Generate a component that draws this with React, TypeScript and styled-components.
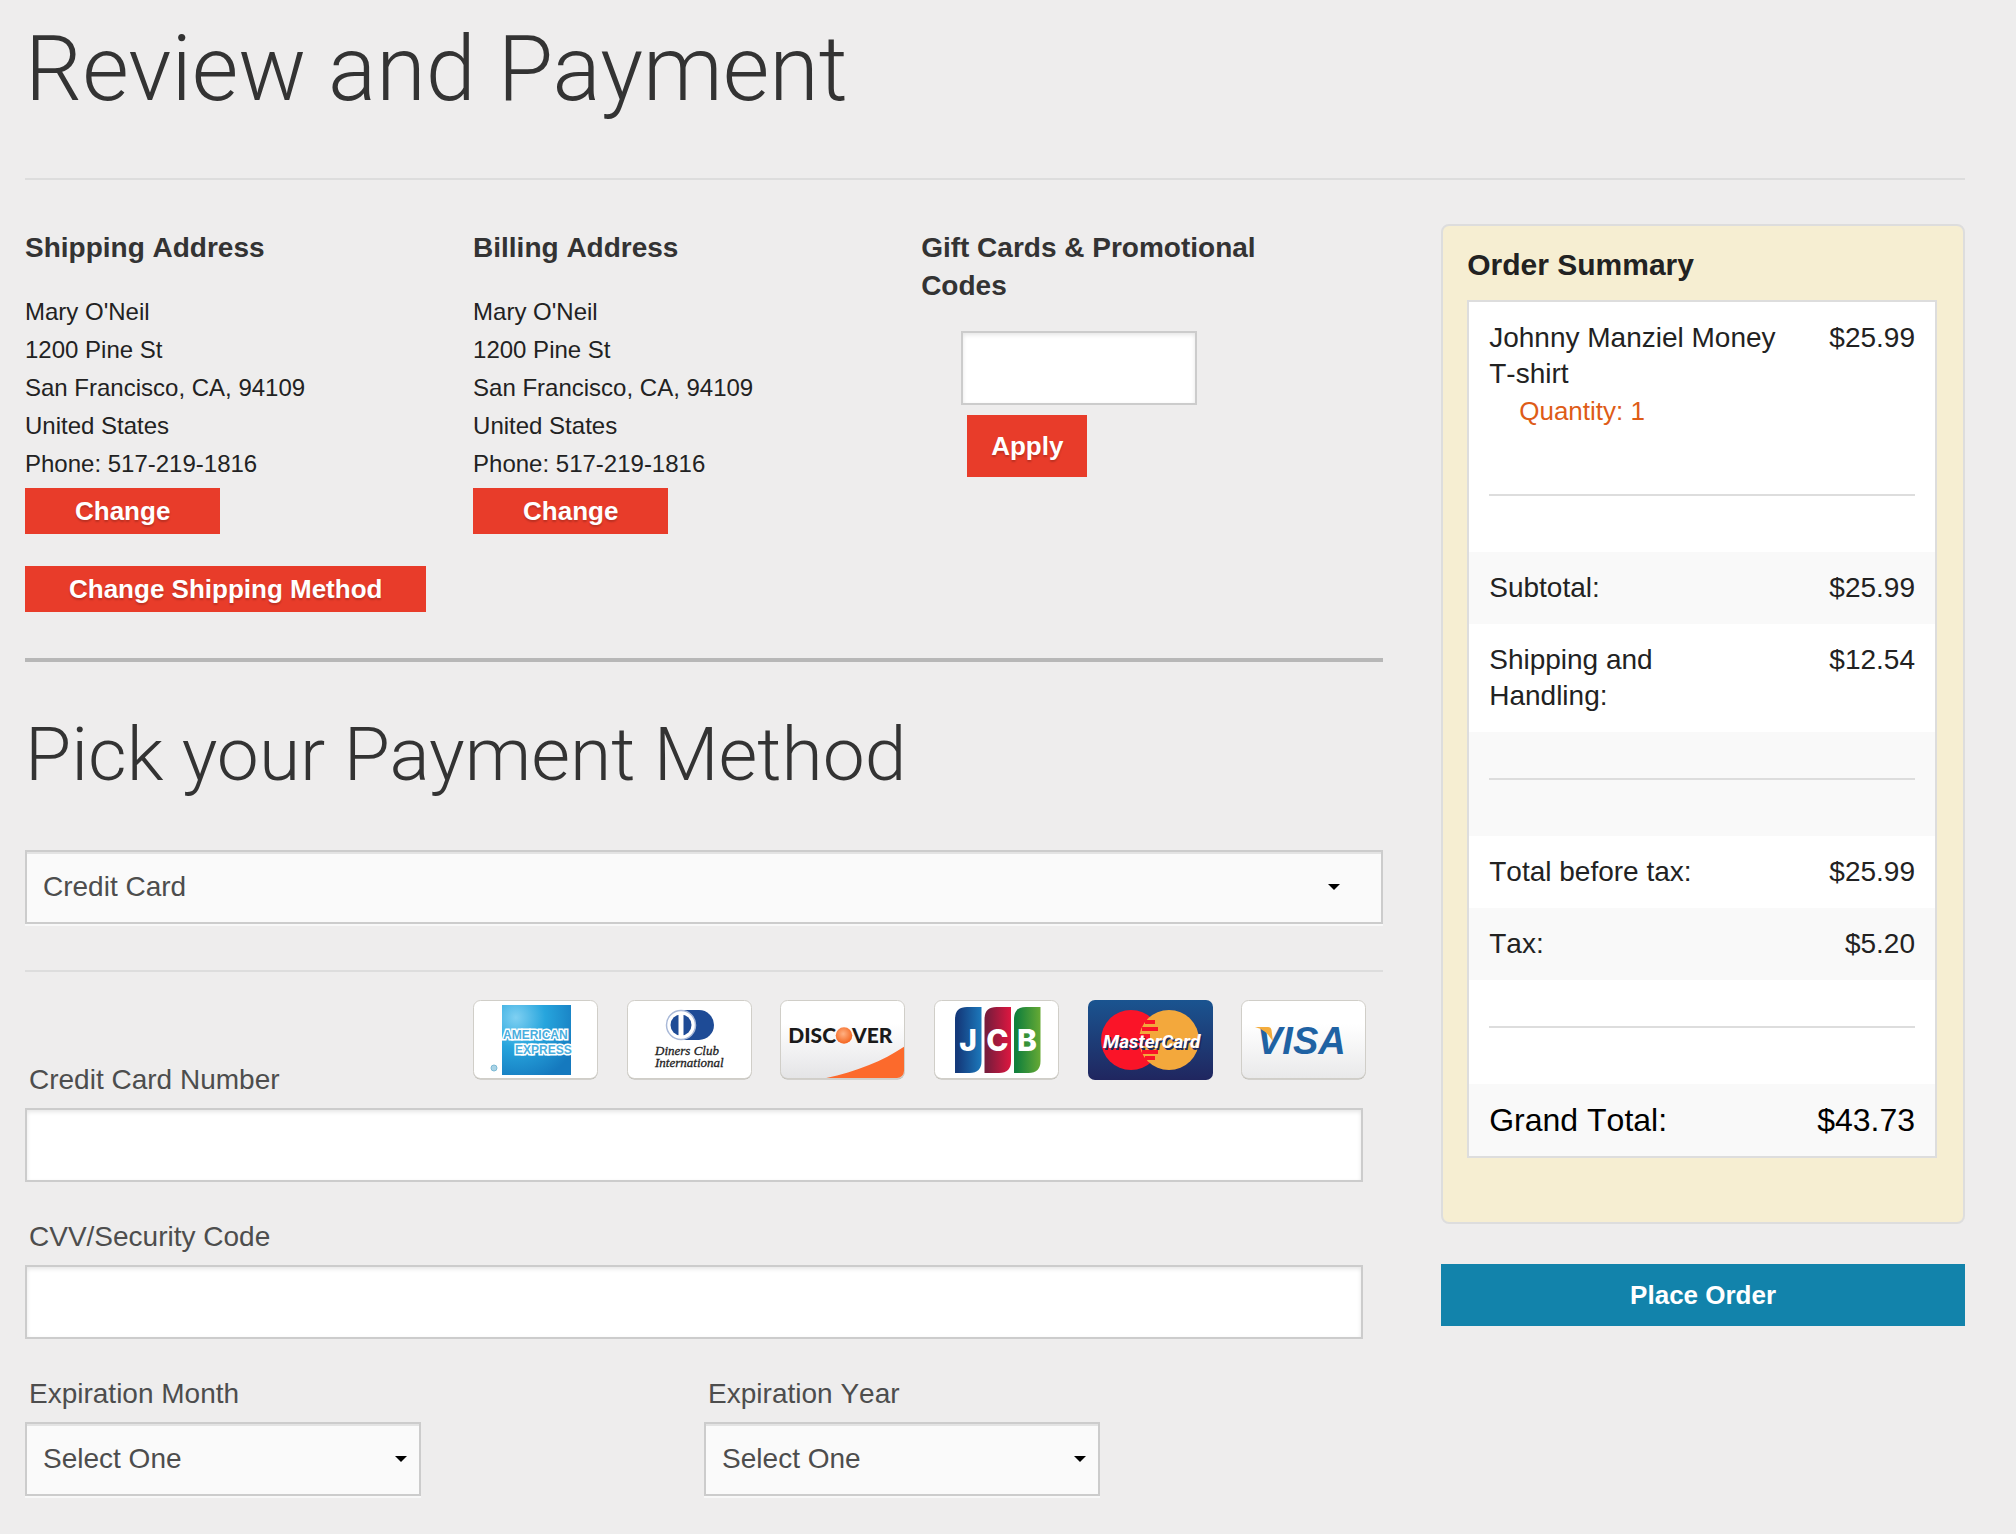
import React from "react";
import styled, { createGlobalStyle, css } from "styled-components";

const color = {
  page: "#eeeded",
  heading: "#333333",
  text: "#222222",
  label: "#4d4d4d",
  line: "#dddddd",
  field: "#cccccc",
  red: "#e83c2a",
  blue: "#1283ab",
};

const GlobalStyle = createGlobalStyle`
  *, *::before, *::after { box-sizing: border-box; }
  body {
    margin: 0;
    background: ${color.page};
    color: ${color.text};
    font-family: "Liberation Sans", Arial, Helvetica, sans-serif;
    font-size: 28px;
    line-height: 38px;
    font-kerning: none;
  }
`;

const Page = styled.div`
  padding: 18px 51px 36px 25px;
`;

const lightTitle = css`
  margin: 0;
  font-family: Roboto, "Helvetica Neue", sans-serif;
  font-weight: 300;
  font-kerning: auto;
  color: ${color.heading};
`;

const PageTitle = styled.h1`
  ${lightTitle}
  font-size: 90px;
  line-height: 104px;
`;

const SectionTitle = styled.h2`
  ${lightTitle}
  font-size: 75px;
  line-height: 88px;
  margin: 48px 0 52px;
`;

const Divider = styled.hr<{ $strong?: boolean; $top: number }>`
  border: 0;
  margin: ${(p) => p.$top}px 0 0;
  height: ${(p) => (p.$strong ? 4 : 2)}px;
  background: ${(p) => (p.$strong ? "#b7b7b7" : color.line)};
`;

const Columns = styled.div`
  display: flex;
  align-items: flex-start;
  gap: 58px;
  padding-top: 44px;
`;

const Main = styled.main`
  flex: 1;
  min-width: 0;
  padding-top: 5px;
`;

const Aside = styled.aside`
  flex: 0 0 27%;
`;

const Thirds = styled.div`
  display: grid;
  grid-template-columns: repeat(3, minmax(0, 1fr));
  padding-right: 14px;
`;

const BlockTitle = styled.h3`
  margin: 0 0 26px;
  padding-right: 30px;
  font-size: 28px;
  line-height: 38px;
  font-weight: 700;
  color: ${color.heading};
`;

const AddressText = styled.address`
  font-style: normal;
  font-size: 24px;
  line-height: 38px;
  margin-bottom: 5px;
`;

const Button = styled.button<{ $size?: "small" | "large"; $tone?: "red" | "blue"; $pad?: number; $wide?: boolean }>`
  display: block;
  border: 0;
  border-radius: 0;
  width: ${(p) => (p.$wide ? "100%" : "auto")};
  height: ${(p) => (p.$size === "large" ? 62 : 46)}px;
  padding: 0 ${(p) => p.$pad ?? 24}px;
  background: ${(p) => (p.$tone === "blue" ? color.blue : color.red)};
  color: #ffffff;
  font-family: inherit;
  font-size: 26px;
  line-height: 38px;
  font-weight: 700;
  text-shadow: ${(p) => (p.$tone === "blue" ? "none" : "0 2px 2px rgba(0, 0, 0, 0.2)")};
  white-space: nowrap;
  cursor: pointer;
`;

const ShippingMethod = styled.div`
  padding: 32px 0 0;
`;

const GiftForm = styled.form`
  display: flex;
  flex-direction: column;
  align-items: flex-start;
  gap: 10px;
  padding-left: 40px;
`;

const ApplyRow = styled.div`
  padding-left: 6px;
`;

const TextInput = styled.input<{ $width?: string }>`
  display: block;
  width: ${(p) => p.$width ?? "100%"};
  height: 74px;
  padding: 0 16px;
  border: 2px solid ${color.field};
  border-radius: 0;
  background: #ffffff;
  box-shadow: inset 0 2px 4px rgba(0, 0, 0, 0.1);
  color: ${color.label};
  font: inherit;
`;

const SelectBox = styled.div<{ $width?: string }>`
  position: relative;
  width: ${(p) => p.$width ?? "100%"};

  &::after {
    content: "";
    position: absolute;
    top: 34px;
    right: calc(3% + 2px);
    border: 6px solid transparent;
    border-top-color: #000000;
    border-bottom-width: 0;
    pointer-events: none;
  }
`;

const Select = styled.select`
  display: block;
  appearance: none;
  width: 100%;
  height: 74px;
  padding: 0 16px;
  border: 2px solid ${color.field};
  border-radius: 0;
  background: #fafafa;
  box-shadow: inset 0 2px 0 rgba(0, 0, 0, 0.09), 0 2px 0 rgba(255, 255, 255, 0.6);
  color: ${color.label};
  font: inherit;
`;

const Field = styled.div`
  padding-top: 34px;
`;

const Label = styled.label`
  display: block;
  padding-left: 4px;
  margin-bottom: 7px;
  line-height: 42px;
  color: ${color.label};
`;

const CardFields = styled.div`
  padding-right: 20px;
`;

const NumberHead = styled.div`
  display: grid;
  grid-template-columns: minmax(0, 1fr) minmax(0, 2fr);
  align-items: end;
  padding: 28px 14px 0 0;
`;

const CardLogos = styled.div`
  display: flex;
  justify-content: space-between;
  padding-right: 3px;
  margin-bottom: 28px;
`;

const Halves = styled.div`
  display: grid;
  grid-template-columns: repeat(2, minmax(0, 1fr));
`;

const SummaryPanel = styled.section`
  padding: 20px 26px 64px 24px;
  border: 2px solid ${color.line};
  border-radius: 8px;
  background: #f6eed2;
  margin-bottom: 40px;
`;

const SummaryTitle = styled.h2`
  margin: 0 0 16px;
  font-size: 30px;
  line-height: 38px;
  font-weight: 700;
`;

const SummaryTable = styled.table`
  width: 100%;
  border: 2px solid ${color.line};
  border-spacing: 0;
  background: #ffffff;
  line-height: 36px;
`;

const StripedBody = styled.tbody`
  tr:nth-of-type(odd) {
    background: #f9f9f9;
  }
`;

const cell = css`
  padding: 18px 20px;
  font-weight: 400;
  vertical-align: top;
`;

const NameCell = styled.th`
  ${cell}
  padding-right: 0;
  text-align: left;
`;

const AmountCell = styled.td`
  ${cell}
  text-align: right;
`;

const RuleCell = styled.td`
  padding: 0 20px 56px;
`;

const TotalRow = styled.tr`
  font-size: 32px;
  color: #000000;
`;

const Quantity = styled.div`
  padding-left: 30px;
  font-size: 26px;
  line-height: 38px;
  color: #de5c17;
`;

const CardSvg = styled.svg`
  display: block;
  width: 125px;
  height: 80px;
`;

const sans = '"Liberation Sans", Arial, sans-serif';

function CardFace({ id, children, tint = "#ffffff", title }: { id: string; children: React.ReactNode; tint?: string; title: string }) {
  return (
    <CardSvg viewBox="0 0 125 80" role="img" aria-label={title}>
      <defs>
        <linearGradient id={id} x1="0" y1="0" x2="0" y2="1">
          <stop offset="0.3" stopColor="#ffffff" />
          <stop offset="1" stopColor={tint} />
        </linearGradient>
        <clipPath id={`${id}-clip`}>
          <rect x="1" y="1" width="123" height="77" rx="7" />
        </clipPath>
      </defs>
      <rect x="0.5" y="1.5" width="124" height="78" rx="7" fill="#b5b3ac" />
      <rect x="0.5" y="0.5" width="124" height="78" rx="7" fill={`url(#${id})`} stroke="#d0cec8" />
      <g clipPath={`url(#${id}-clip)`}>{children}</g>
    </CardSvg>
  );
}

function AmexCard() {
  return (
    <CardFace id="amex" title="American Express">
      <defs>
        <radialGradient id="amex-sky" cx="0.2" cy="0.18" r="0.95">
          <stop offset="0" stopColor="#7fd0f2" />
          <stop offset="0.45" stopColor="#27a5dd" />
          <stop offset="1" stopColor="#1579be" />
        </radialGradient>
      </defs>
      <rect x="29" y="5" width="69" height="70" fill="url(#amex-sky)" />
      <g fontFamily={sans} fontSize="12" fontWeight="700" fill="#4aaede" stroke="#ffffff" strokeWidth="3" paintOrder="stroke">
        <text x="30" y="39">AMERICAN</text>
        <text x="42" y="54">EXPRESS</text>
      </g>
      <circle cx="21" cy="68" r="3" fill="#a9d3e6" stroke="#7db9d4" />
    </CardFace>
  );
}

function DinersCard() {
  return (
    <CardFace id="diners" title="Diners Club International">
      <path d="M54 10H72A15 15 0 0 1 72 40H54Z" fill="#1e4b96" />
      <circle cx="54" cy="25" r="14.5" fill="#ffffff" stroke="#a9b9d8" strokeWidth="1.5" />
      <circle cx="54" cy="25" r="10.5" fill="#1e4b96" />
      <rect x="51.5" y="13" width="5" height="24" fill="#ffffff" />
      <g fontFamily='"Liberation Serif", "Times New Roman", serif' fontStyle="italic" fontSize="13" fill="#222222" stroke="#222222" strokeWidth="0.3">
        <text x="28" y="55">Diners Club</text>
        <text x="28" y="67">International</text>
      </g>
    </CardFace>
  );
}

function DiscoverCard() {
  return (
    <CardFace id="discover" title="Discover" tint="#e4e4e6">
      <defs>
        <radialGradient id="discover-o" cx="0.45" cy="0.4" r="0.6">
          <stop offset="0" stopColor="#ffb183" />
          <stop offset="1" stopColor="#f4651f" />
        </radialGradient>
      </defs>
      <path d="M36 80C70 74 102 62 125 46V80Z" fill="#fc6a2c" />
      <g fontFamily="Lato, sans-serif" fontSize="21" fontWeight="900" fill="#1a1a1a">
        <text x="56" y="43" textAnchor="end">DISC</text>
        <text x="72" y="43">VER</text>
      </g>
      <circle cx="64" cy="35.5" r="8.3" fill="url(#discover-o)" />
    </CardFace>
  );
}

function JcbCard() {
  const bars = [
    { x: 21, from: "#143a7b", to: "#1c78bb", letter: "J" },
    { x: 50.5, from: "#7a1c3c", to: "#dd1740", letter: "C" },
    { x: 80, from: "#12803c", to: "#66a934", letter: "B" },
  ];
  return (
    <CardFace id="jcb" title="JCB">
      {bars.map((bar) => (
        <g key={bar.letter}>
          <linearGradient id={`jcb-${bar.letter}`}>
            <stop offset="0.1" stopColor={bar.from} />
            <stop offset="1" stopColor={bar.to} />
          </linearGradient>
          <path
            d={`M${bar.x} 19Q${bar.x} 7 ${bar.x + 12} 7H${bar.x + 26.5}V61Q${bar.x + 26.5} 73 ${bar.x + 14.5} 73H${bar.x}Z`}
            fill={`url(#jcb-${bar.letter})`}
          />
          <text
            x={bar.x + 13}
            y="50.5"
            textAnchor="middle"
            fontFamily="Inter, sans-serif"
            fontWeight="800"
            fontSize="30"
            fill="#ffffff"
          >
            {bar.letter}
          </text>
        </g>
      ))}
    </CardFace>
  );
}

function MasterCard() {
  return (
    <CardSvg viewBox="0 0 125 80" role="img" aria-label="MasterCard">
      <defs>
        <linearGradient id="mc-back" x1="0" y1="0" x2="0" y2="1">
          <stop offset="0" stopColor="#1a5490" />
          <stop offset="1" stopColor="#20265f" />
        </linearGradient>
      </defs>
      <rect width="125" height="80" rx="7" fill="url(#mc-back)" />
      <circle cx="43" cy="40" r="30" fill="#fa1428" />
      <circle cx="81" cy="40" r="30" fill="#f3a83c" />
      <path d="M57 20H67V24H57ZM54 27H70V31H54ZM54 50H70V54H54ZM57 56H67V60H57Z" fill="#fa1428" />
      <path d="M51 34H62V46H51Z" fill="#fa1428" />
      <g fontFamily="Roboto, sans-serif" fontSize="19" fontWeight="700" fontStyle="italic">
        <text x="16.5" y="49.5" fill="#1b2a5e">MasterCard</text>
        <text x="15" y="48" fill="#ffffff">MasterCard</text>
      </g>
    </CardSvg>
  );
}

function VisaCard() {
  return (
    <CardFace id="visa" title="Visa" tint="#e9e9ea">
      <text x="16" y="54" fontFamily={sans} fontSize="38" fontWeight="700" fontStyle="italic" fill="#1f62a3">
        VISA
      </text>
      <path d="M14 27H27Q30 27 30.5 30L32 42Q26 30 14 27Z" fill="#f4ac3c" />
    </CardFace>
  );
}

const address = ["Mary O'Neil", "1200 Pine St", "San Francisco, CA, 94109", "United States", "Phone: 517-219-1816"];

function AddressBlock({ title }: { title: string }) {
  return (
    <section>
      <BlockTitle>{title}</BlockTitle>
      <AddressText>
        {address.map((line) => (
          <div key={line}>{line}</div>
        ))}
      </AddressText>
      <Button type="button" $pad={50}>Change</Button>
    </section>
  );
}

function SelectField({ id, label }: { id: string; label: string }) {
  return (
    <Field>
      <Label htmlFor={id}>{label}</Label>
      <SelectBox $width="58.3%">
        <Select id={id}>
          <option>Select One</option>
        </Select>
      </SelectBox>
    </Field>
  );
}

function SummaryRule() {
  return (
    <tr>
      <RuleCell colSpan={2}>
        <Divider $top={46} />
      </RuleCell>
    </tr>
  );
}

function SummaryRow({ name, amount }: { name: React.ReactNode; amount: string }) {
  return (
    <tr>
      <NameCell scope="row">{name}</NameCell>
      <AmountCell>{amount}</AmountCell>
    </tr>
  );
}

export default function App() {
  return (
    <>
      <GlobalStyle />
      <Page>
        <PageTitle>Review and Payment</PageTitle>
        <Divider $top={56} />
        <Columns>
          <Main>
            <Thirds>
              <AddressBlock title="Shipping Address" />
              <AddressBlock title="Billing Address" />
              <section>
                <BlockTitle id="gift-title">Gift Cards &amp; Promotional Codes</BlockTitle>
                <GiftForm onSubmit={(e) => e.preventDefault()}>
                  <TextInput type="text" aria-labelledby="gift-title" $width="236px" />
                  <ApplyRow>
                    <Button type="submit" $size="large">Apply</Button>
                  </ApplyRow>
                </GiftForm>
              </section>
            </Thirds>
            <ShippingMethod>
              <Button type="button" $pad={44}>Change Shipping Method</Button>
            </ShippingMethod>
            <Divider $strong $top={46} />

            <SectionTitle>Pick your Payment Method</SectionTitle>
            <SelectBox>
              <Select aria-label="Payment method">
                <option>Credit Card</option>
              </Select>
            </SelectBox>
            <Divider $top={46} />

            <NumberHead>
              <Label htmlFor="card-number">Credit Card Number</Label>
              <CardLogos>
                <AmexCard />
                <DinersCard />
                <DiscoverCard />
                <JcbCard />
                <MasterCard />
                <VisaCard />
              </CardLogos>
            </NumberHead>
            <CardFields>
              <TextInput id="card-number" type="text" />
              <Field>
                <Label htmlFor="card-cvv">CVV/Security Code</Label>
                <TextInput id="card-cvv" type="text" />
              </Field>
            </CardFields>
            <Halves>
              <SelectField id="exp-month" label="Expiration Month" />
              <SelectField id="exp-year" label="Expiration Year" />
            </Halves>
          </Main>

          <Aside>
            <SummaryPanel>
              <SummaryTitle>Order Summary</SummaryTitle>
              <SummaryTable>
                <tbody>
                  <tr>
                    <NameCell scope="row">
                      Johnny Manziel Money
                      <br />
                      T-shirt
                      <Quantity>Quantity: 1</Quantity>
                    </NameCell>
                    <AmountCell>$25.99</AmountCell>
                  </tr>
                  <SummaryRule />
                </tbody>
                <StripedBody>
                  <SummaryRow name="Subtotal:" amount="$25.99" />
                  <SummaryRow name={<>Shipping and<br />Handling:</>} amount="$12.54" />
                  <SummaryRule />
                  <SummaryRow name="Total before tax:" amount="$25.99" />
                  <SummaryRow name="Tax:" amount="$5.20" />
                  <SummaryRule />
                  <TotalRow>
                    <NameCell scope="row">Grand Total:</NameCell>
                    <AmountCell>$43.73</AmountCell>
                  </TotalRow>
                </StripedBody>
              </SummaryTable>
            </SummaryPanel>
            <Button type="button" $size="large" $tone="blue" $wide>Place Order</Button>
          </Aside>
        </Columns>
      </Page>
    </>
  );
}
